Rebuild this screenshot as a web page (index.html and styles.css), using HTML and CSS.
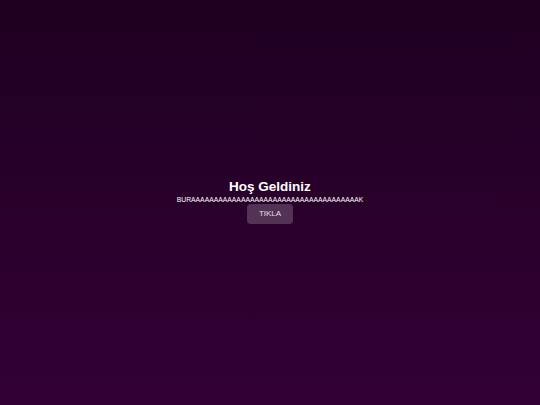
FILE: index.html
```html
<!DOCTYPE html>
<html lang="tr">
<head>
<meta charset="utf-8">
<title>Hoş Geldiniz</title>
<link rel="stylesheet" href="styles.css">
</head>
<body>
<main class="welcome">
  <h1 class="title">Hoş Geldiniz</h1>
  <p class="subtitle">BURAAAAAAAAAAAAAAAAAAAAAAAAAAAAAAAAAAAAAK</p>
  <button class="btn" type="button">TIKLA</button>
</main>
</body>
</html>
```
FILE: styles.css
```css
html, body {
  margin: 0;
  height: 100%;
}
body {
  background: linear-gradient(to bottom, #1e0020 0%, #330035 100%);
  font-family: "Liberation Sans", Arial, sans-serif;
  color: #ffffff;
  display: flex;
  align-items: center;
  justify-content: center;
}
.welcome {
  display: flex;
  flex-direction: column;
  align-items: center;
  padding-bottom: 2px;
}
.title {
  margin: 0;
  font-size: 13.5px;
  font-weight: bold;
  line-height: 14px;
}
.subtitle {
  margin: 2px 0 0;
  font-size: 6.8px;
  line-height: 8px;
}
.btn {
  margin-top: 0;
  width: 46px;
  height: 20px;
  border: none;
  border-radius: 4px;
  background: rgba(255, 255, 255, 0.2);
  color: #e6dde6;
  font-family: "Liberation Sans", Arial, sans-serif;
  font-size: 8px;
  padding: 0;
}
```
